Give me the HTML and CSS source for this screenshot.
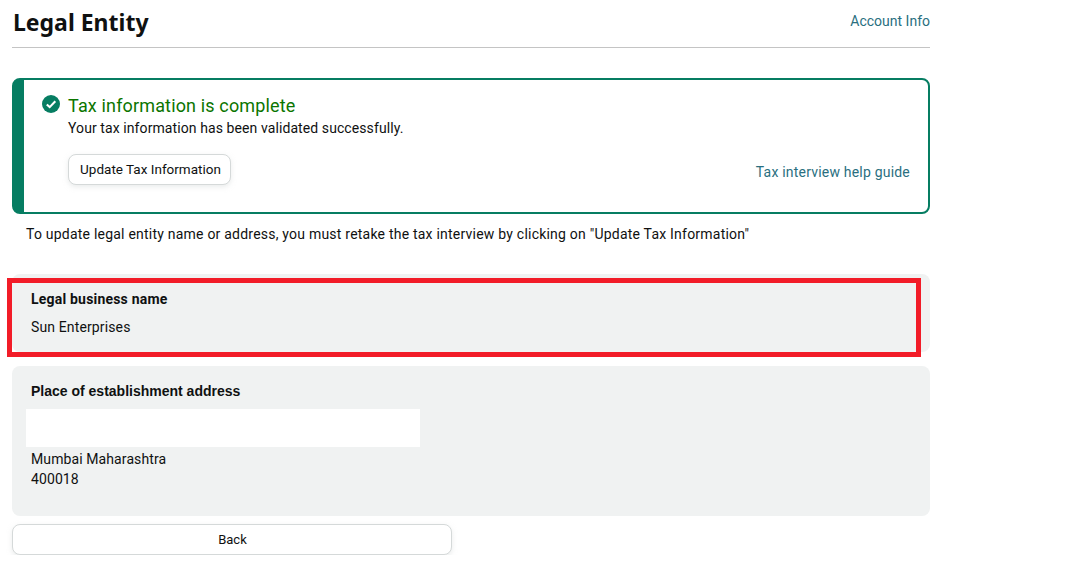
FILE: index.html
```html
<!DOCTYPE html>
<html lang="en">
<head>
<meta charset="utf-8">
<title>Legal Entity</title>
<link rel="stylesheet" href="styles.css">
</head>
<body>
<main class="page">
  <header class="page-header">
    <h1 class="page-title">Legal Entity</h1>
    <a class="link account-link" href="#">Account Info</a>
  </header>
  <section class="alert">
    <div class="alert-head">
      <svg class="alert-icon" viewBox="0 0 18 18" aria-hidden="true">
        <circle cx="9" cy="9" r="9" fill="#067d62"/>
        <path d="M4.8 9.4 7.7 12.1 13.3 6.2" fill="none" stroke="#fff" stroke-width="2.1"/>
      </svg>
      <h2 class="alert-title">Tax information is complete</h2>
    </div>
    <p class="alert-text">Your tax information has been validated successfully.</p>
    <div class="alert-actions">
      <button class="btn btn-update" type="button">Update Tax Information</button>
      <a class="link guide-link" href="#">Tax interview help guide</a>
    </div>
  </section>
  <p class="note">To update legal entity name or address, you must retake the tax interview by clicking on "Update Tax Information"</p>
  <section class="card card-name">
    <h3 class="card-label">Legal business name</h3>
    <p class="card-value">Sun Enterprises</p>
    <div class="highlight"></div>
  </section>
  <section class="card card-address">
    <h3 class="card-label card-label-strong">Place of establishment address</h3>
    <div class="redaction"></div>
    <p class="address-line">Mumbai Maharashtra</p>
    <p class="address-line">400018</p>
  </section>
  <button class="btn btn-back" type="button">Back</button>
</main>
</body>
</html>
```
FILE: styles.css
```css
* { box-sizing: border-box; }
html, body { margin: 0; padding: 0; background: #fff; }
body {
  font-family: Roboto, "Noto Sans", sans-serif;
  font-size: 14px;
  color: #0f1111;
  overflow: hidden;
}
.page {
  width: 918px;
  margin-left: 12px;
  display: flex;
  flex-direction: column;
}
.page-header {
  height: 48px;
  border-bottom: 1px solid #c4c4c4;
  display: flex;
  justify-content: space-between;
  align-items: flex-start;
}
.page-title {
  margin: 4px 0 0 1px;
  font-family: "Noto Sans", sans-serif;
  font-size: 23px;
  line-height: 36px;
  font-weight: 700;
}
.link { color: #2a6f7f; text-decoration: none; }
.account-link { margin-top: 12px; line-height: 18px; }
.alert {
  margin-top: 30px;
  height: 136px;
  border: 2px solid #067d62;
  border-left-width: 12px;
  border-radius: 8px;
  padding: 15px 18px 0 18px;
  display: flex;
  flex-direction: column;
}
.alert-head { display: flex; align-items: flex-start; gap: 8px; }
.alert-icon { width: 18px; height: 18px; flex: none; }
.alert-title {
  margin: 0;
  font-size: 18px;
  line-height: 22px;
  font-weight: 400;
  letter-spacing: .15px;
  color: #0b7500;
}
.alert-text { margin: 2px 0 0 26px; line-height: 18px; letter-spacing: .09px; }
.alert-actions {
  margin: 17px 0 0 26px;
  display: flex;
  justify-content: space-between;
  align-items: flex-end;
}
.btn {
  font: inherit;
  color: #0f1111;
  background: #fff;
  border: 1px solid #d5d9d9;
  border-radius: 8px;
  box-shadow: 0 2px 5px rgba(213, 217, 217, .5);
  padding: 0;
}
.btn-update { width: 163px; height: 31px; font-size: 13.5px; padding: 0 0 2px 2px; }
.guide-link { line-height: 18px; margin-bottom: 4px; letter-spacing: .2px; }
.note { margin: 11px 0 0 14px; line-height: 18px; height: 18px; letter-spacing: .22px; }
.card {
  background: #f0f2f2;
  border-radius: 8px;
  padding: 0 19px;
}
.card-name {
  position: relative;
  margin-top: 31px;
  height: 78px;
  padding-top: 16px;
}
.card-label { margin: 0; font-size: 14px; line-height: 18px; font-weight: 700; letter-spacing: .2px; }
.card-value { margin: 10px 0 0; line-height: 18px; letter-spacing: .13px; }
.highlight {
  position: absolute;
  left: -5px;
  top: 4px;
  width: 914px;
  height: 79px;
  border: 5px solid #f21c28;
}
.card-address {
  margin-top: 14px;
  height: 150px;
  padding-top: 16px;
}
.card-label-strong { font-family: "Liberation Sans", Arial, sans-serif; letter-spacing: 0; }
.redaction {
  margin: 9px 0 2px -5px;
  width: 394px;
  height: 38px;
  background: #fff;
}
.address-line { margin: 0; line-height: 20px; letter-spacing: .1px; }
.btn-back { margin-top: 8px; width: 440px; height: 31px; font-size: 13px; padding-left: 1px; }
```
